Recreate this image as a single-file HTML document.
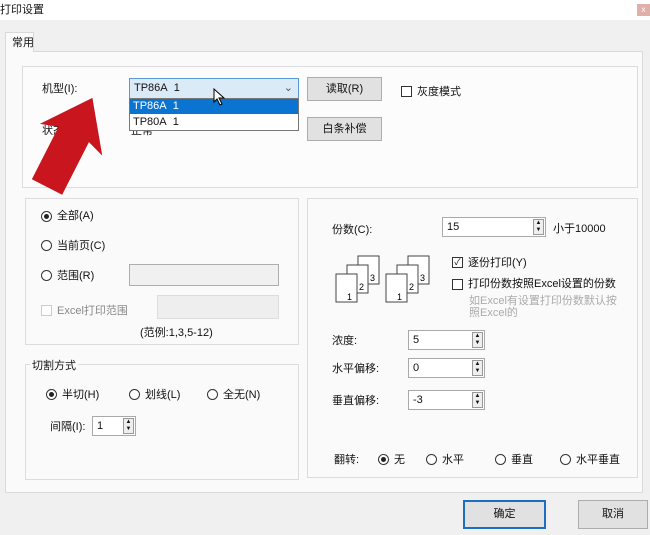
<!DOCTYPE html>
<html><head><meta charset="utf-8"><style>
*{margin:0;padding:0;box-sizing:border-box}
body{width:650px;height:535px;background:#f0f0f0;font-family:"Liberation Sans","Noto Sans CJK SC",sans-serif;font-size:11px;line-height:16px;color:#111;position:relative;overflow:hidden}
.a{position:absolute;white-space:nowrap}
.box{position:absolute;border:1px solid #dcdcdc}
.btn{position:absolute;background:#e1e1e1;border:1px solid #adadad;text-align:center}
.inp{position:absolute;background:#fff;border:1px solid #a9a9a9;padding-left:4px}
.rad{position:absolute;width:11px;height:11px;border:1px solid #333;border-radius:50%;background:#fff}
.rad.on::after{content:"";position:absolute;left:2px;top:2px;width:5px;height:5px;border-radius:50%;background:#222}
.chk{position:absolute;width:11px;height:11px;border:1px solid #333;background:#fff}
.spin{position:absolute;width:11px;background:#eee;border:1px solid #999;font-size:6px;line-height:7px;text-align:center}
</style></head><body>
<div class="a" style="left:0;top:0;width:650px;height:20px;background:#fff"></div>
<div class="a" style="left:0;top:2px">打印设置</div>
<div class="a" style="left:637px;top:4px;width:13px;height:12px;background:#e0b0a8;color:#fff;font-size:8px;line-height:12px;text-align:center">x</div>
<div class="a" style="left:5px;top:51px;width:638px;height:442px;background:#fafafa;border:1px solid #d9d9d9"></div>
<div class="a" style="left:5px;top:32px;width:29px;height:20px;background:#fafafa;border:1px solid #d9d9d9;border-bottom:none;padding:2px 0 0 6px">常用</div>
<div class="box" style="left:22px;top:66px;width:616px;height:122px;background:#fcfcfc"></div>
<div class="a" style="left:42px;top:81px">机型(I):</div>
<div class="a" style="left:42px;top:123px">状态</div>
<div class="a" style="left:131px;top:123px">正常</div>
<div class="inp" style="left:129px;top:78px;width:170px;height:21px;background:#dbeaf7;border-color:#5a9bd5;line-height:19px">TP86A&nbsp; 1<span style="position:absolute;right:5px;color:#555">⌄</span></div>
<div class="a" style="left:129px;top:98px;width:170px;height:33px;background:#fff;border:1px solid #777"></div>
<div class="a" style="left:130px;top:99px;width:168px;height:15px;background:#0a74d0;color:#fff;padding-left:3px;line-height:15px">TP86A&nbsp; 1</div>
<div class="a" style="left:133px;top:114px">TP80A&nbsp; 1</div>
<svg class="a" style="left:213px;top:88px" width="14" height="18"><path d="M1 1 L1 14 L4 11 L7 17 L9 16 L6 10 L11 10 Z" fill="#fff" stroke="#000"/></svg>
<div class="btn" style="left:307px;top:77px;width:75px;height:24px;line-height:22px">读取(R)</div>
<div class="btn" style="left:307px;top:117px;width:75px;height:24px;line-height:22px">白条补偿</div>
<div class="chk" style="left:401px;top:86px"></div><div class="a" style="left:417px;top:84px">灰度模式</div>
<svg class="a" style="left:0;top:60px" width="160" height="150"><polygon points="0,-100 35,-53 17,-59 17,0 -17,0 -17,-59 -35,-53" fill="#c8151e" transform="translate(47,127) rotate(27)"/></svg>

<div class="box" style="left:25px;top:198px;width:274px;height:147px"></div>
<div class="rad on" style="left:41px;top:211px"></div><div class="a" style="left:57px;top:208px">全部(A)</div>
<div class="rad" style="left:41px;top:240px"></div><div class="a" style="left:57px;top:238px">当前页(C)</div>
<div class="rad" style="left:41px;top:270px"></div><div class="a" style="left:57px;top:268px">范围(R)</div>
<div class="a" style="left:129px;top:264px;width:150px;height:22px;background:#f0f0f0;border:1px solid #adadad"></div>
<div class="chk" style="left:41px;top:305px;border-color:#ccc"></div><div class="a" style="left:57px;top:303px;color:#888">Excel打印范围</div>
<div class="a" style="left:157px;top:295px;width:122px;height:24px;background:#eeeeee;border:1px solid #ddd"></div>
<div class="a" style="left:140px;top:325px">(范例:1,3,5-12)</div>

<div class="box" style="left:25px;top:364px;width:274px;height:116px"></div>
<div class="a" style="left:30px;top:358px;background:#fafafa;padding:0 2px">切割方式</div>
<div class="rad on" style="left:46px;top:389px"></div><div class="a" style="left:62px;top:387px">半切(H)</div>
<div class="rad" style="left:129px;top:389px"></div><div class="a" style="left:145px;top:387px">划线(L)</div>
<div class="rad" style="left:207px;top:389px"></div><div class="a" style="left:223px;top:387px">全无(N)</div>
<div class="a" style="left:50px;top:419px">间隔(I):</div>
<div class="inp" style="left:92px;top:416px;width:44px;height:20px;line-height:18px">1</div>
<div class="spin" style="left:123px;top:418px;height:16px">▲<br>▼</div>

<div class="box" style="left:307px;top:198px;width:331px;height:280px"></div>
<div class="a" style="left:332px;top:222px">份数(C):</div>
<div class="inp" style="left:442px;top:217px;width:104px;height:20px;line-height:18px">15</div>
<div class="spin" style="left:533px;top:219px;height:16px">▲<br>▼</div>
<div class="a" style="left:553px;top:221px">小于10000</div>
<svg class="a" style="left:330px;top:252px" width="120" height="56" fill="#fff" stroke="#444" font-size="9" font-family="Liberation Sans">
<rect x="28" y="4" width="21" height="28"/><text x="40" y="29" fill="#000" stroke="none">3</text>
<rect x="17" y="13" width="21" height="28"/><text x="29" y="38" fill="#000" stroke="none">2</text>
<rect x="6" y="22" width="21" height="28"/><text x="17" y="48" fill="#000" stroke="none">1</text>
<rect x="78" y="4" width="21" height="28"/><text x="90" y="29" fill="#000" stroke="none">3</text>
<rect x="67" y="13" width="21" height="28"/><text x="79" y="38" fill="#000" stroke="none">2</text>
<rect x="56" y="22" width="21" height="28"/><text x="67" y="48" fill="#000" stroke="none">1</text>
</svg>
<div class="chk" style="left:452px;top:257px;font-size:9px;line-height:9px;text-align:center">✓</div><div class="a" style="left:468px;top:255px">逐份打印(Y)</div>
<div class="chk" style="left:452px;top:279px"></div><div class="a" style="left:468px;top:276px">打印份数按照Excel设置的份数</div>
<div class="a" style="left:469px;top:295px;color:#aaa;line-height:12px">如Excel有设置打印份数默认按<br>照Excel的</div>
<div class="a" style="left:332px;top:333px">浓度:</div>
<div class="inp" style="left:408px;top:330px;width:77px;height:20px;line-height:18px">5</div>
<div class="spin" style="left:472px;top:332px;height:16px">▲<br>▼</div>
<div class="a" style="left:332px;top:361px">水平偏移:</div>
<div class="inp" style="left:408px;top:358px;width:77px;height:20px;line-height:18px">0</div>
<div class="spin" style="left:472px;top:360px;height:16px">▲<br>▼</div>
<div class="a" style="left:332px;top:393px">垂直偏移:</div>
<div class="inp" style="left:408px;top:390px;width:77px;height:20px;line-height:18px">-3</div>
<div class="spin" style="left:472px;top:392px;height:16px">▲<br>▼</div>
<div class="a" style="left:334px;top:452px">翻转:</div>
<div class="rad on" style="left:378px;top:454px"></div><div class="a" style="left:394px;top:452px">无</div>
<div class="rad" style="left:426px;top:454px"></div><div class="a" style="left:442px;top:452px">水平</div>
<div class="rad" style="left:495px;top:454px"></div><div class="a" style="left:511px;top:452px">垂直</div>
<div class="rad" style="left:560px;top:454px"></div><div class="a" style="left:576px;top:452px">水平垂直</div>

<div class="btn" style="left:463px;top:500px;width:83px;height:29px;line-height:25px;border:2px solid #1a6fc4">确定</div>
<div class="btn" style="left:578px;top:500px;width:70px;height:29px;line-height:27px">取消</div>
</body></html>
